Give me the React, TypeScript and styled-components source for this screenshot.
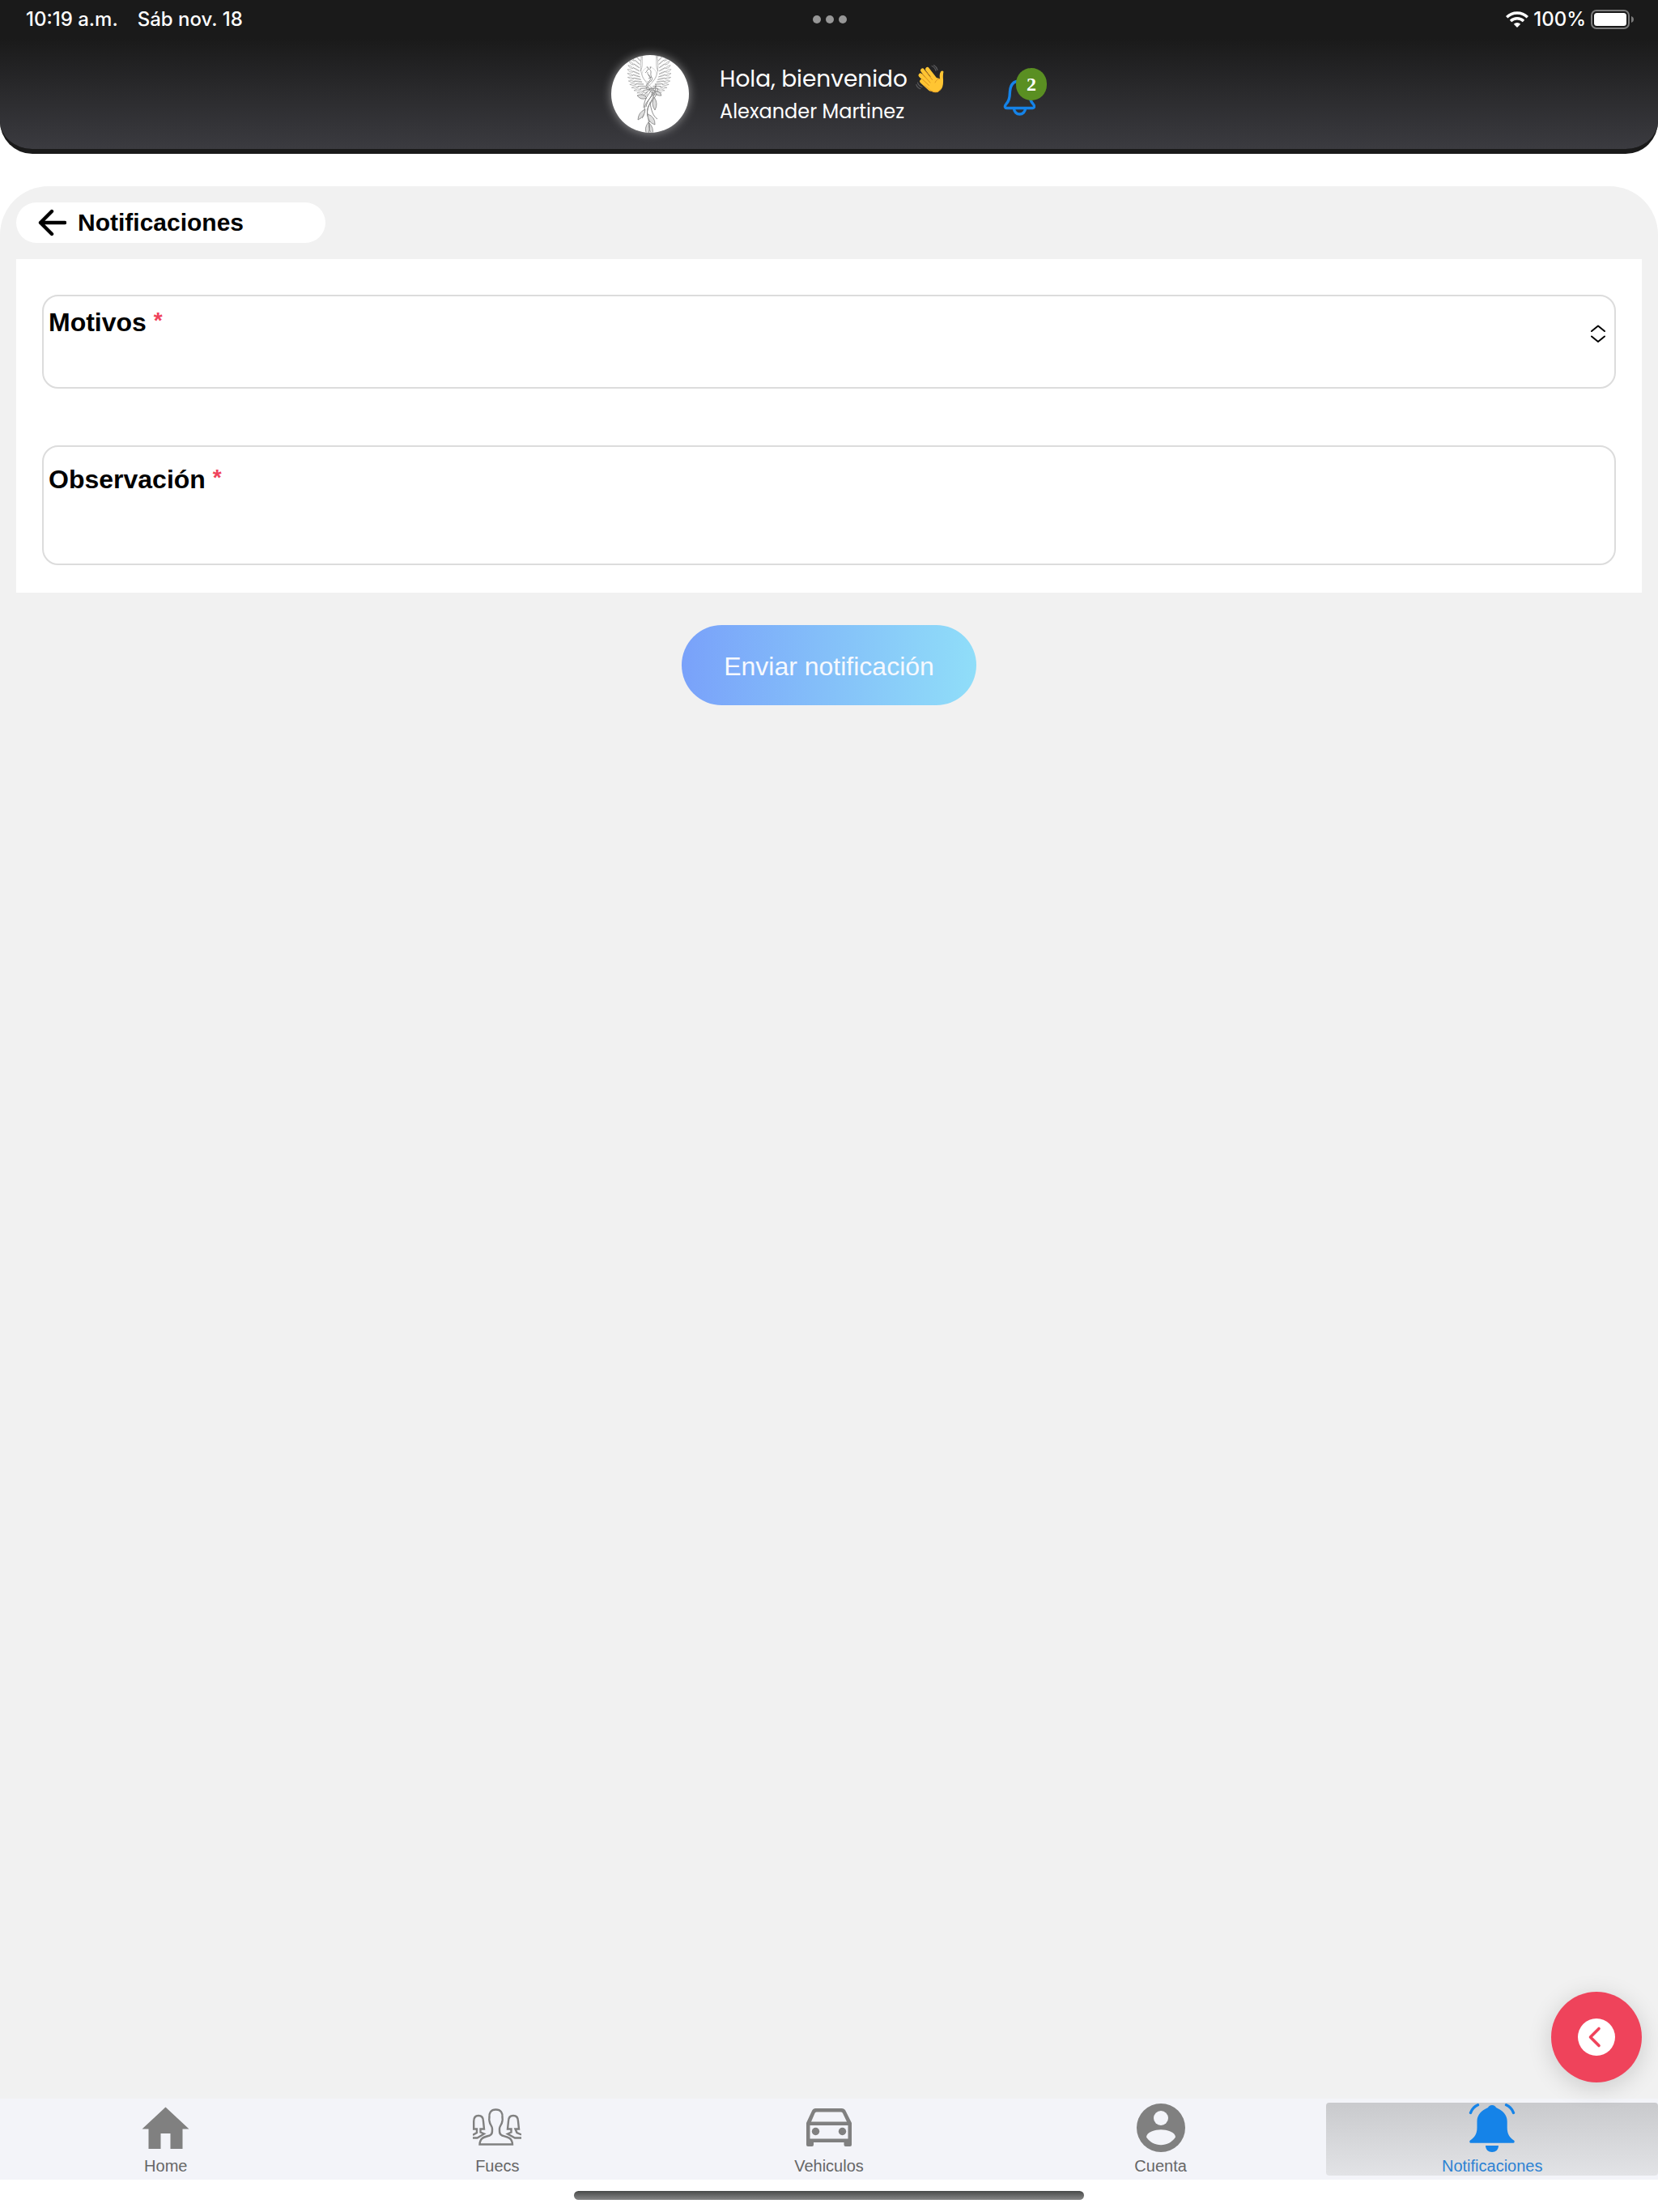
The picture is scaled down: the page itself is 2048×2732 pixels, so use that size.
import React, { useState } from "react";
import styled, { createGlobalStyle } from "styled-components";

const sans = `"Liberation Sans", Arial, sans-serif`;
const rounded = `Poppins, Inter, "Liberation Sans", sans-serif`;

const GlobalStyle = createGlobalStyle`
  *, *::before, *::after { box-sizing: border-box; }
  body { margin: 0; background: #fff; font-family: ${sans}; }
  button, select, input { font: inherit; color: inherit; }
  svg { display: block; }
`;

const Page = styled.div`
  min-height: 100vh;
  display: flex;
  flex-direction: column;
`;

const Header = styled.header`
  background: linear-gradient(#1a1a1a 48px, #3b3b40 100%) padding-box, #1a1a1a;
  border-bottom: 6px solid #1a1a1a;
  border-radius: 0 0 40px 40px;
  color: #fff;
  height: 190px;
`;

const StatusBar = styled.div`
  display: grid;
  grid-template-columns: 1fr auto 1fr;
  align-items: center;
  height: 48px;
  padding: 0 30px 0 32px;
  font: 500 24px/28px Inter, sans-serif;
`;

const StatusGroup = styled.div<{ $end?: boolean; $gap: number }>`
  display: flex;
  align-items: center;
  justify-content: ${(p) => (p.$end ? "flex-end" : "flex-start")};
  gap: ${(p) => p.$gap}px;
`;

const Dot = styled.span`
  width: 10px;
  height: 10px;
  border-radius: 50%;
  background: #979797;
`;

const Welcome = styled.div`
  display: flex;
  justify-content: center;
  align-items: center;
  height: 136px;
`;

const Avatar = styled.div`
  width: 96px;
  height: 96px;
  margin-right: 38px;
  border-radius: 50%;
  background: #fff;
  box-shadow: 0 0 12px rgba(255, 255, 255, 0.5);
  overflow: hidden;
`;

const Greeting = styled.div`
  display: flex;
  flex-direction: column;
  margin-right: 72px;
  font-family: ${rounded};
`;

const Hello = styled.p`
  display: flex;
  align-items: center;
  gap: 10px;
  margin: 0;
  font-size: 28px;
  line-height: 44px;
`;

const UserName = styled.p`
  margin: 0;
  font-size: 24px;
  line-height: 36px;
`;

const BellButton = styled.button`
  position: relative;
  display: flex;
  align-items: flex-end;
  width: 54px;
  height: 64px;
  padding: 0 0 4px;
  border: 0;
  background: none;
`;

const Badge = styled.span`
  position: absolute;
  top: 0;
  right: 0;
  width: 38px;
  height: 40px;
  border-radius: 20px;
  background: #5a8f22;
  color: #fff;
  font: bold 24px/40px "Liberation Serif", "Times New Roman", serif;
  text-align: center;
`;

const Main = styled.main`
  flex: 1;
  display: flex;
  flex-direction: column;
  margin-top: 40px;
  padding: 20px;
  border-radius: 60px 60px 0 0;
  background: #f1f1f1;
`;

const BackButton = styled.button`
  display: flex;
  align-items: center;
  gap: 14px;
  width: 19%;
  min-width: 320px;
  height: 50px;
  padding: 0 26px;
  border: 0;
  border-radius: 25px;
  background: #fff;
  color: #000;
  font: bold 30px/36px ${sans};
`;

const Form = styled.form`
  display: flex;
  flex-direction: column;
  align-items: center;
  gap: 40px;
  margin-top: 20px;
`;

const Card = styled.div`
  align-self: stretch;
  display: flex;
  flex-direction: column;
  gap: 70px;
  padding: 44px 32px 34px;
  background: #fff;
`;

const Field = styled.div<{ $tall?: boolean }>`
  display: flex;
  justify-content: space-between;
  height: ${(p) => (p.$tall ? 148 : 116)}px;
  padding: ${(p) => (p.$tall ? 22 : 14)}px 10px 0 6px;
  border: 2px solid #dcdcdc;
  border-radius: 20px;
  background: #fff;
`;

const FieldBody = styled.div`
  flex: 1;
  display: flex;
  flex-direction: column;
`;

const Label = styled.label`
  font: bold 32px/36px ${sans};
  color: #000;
`;

const Required = styled.span`
  color: #ef435b;
  font-size: 28px;
  line-height: 24px;
  vertical-align: 4px;
`;

const Select = styled.select`
  flex: 1;
  width: 100%;
  padding: 0;
  border: 0;
  outline: 0;
  background: transparent;
  appearance: none;
  font-size: 28px;
`;

const TextInput = styled.input`
  flex: 1;
  width: 100%;
  padding: 0;
  border: 0;
  outline: 0;
  background: transparent;
  font-size: 28px;
`;

const Submit = styled.button`
  padding: 33px 52px 30px;
  border: 0;
  border-radius: 50px;
  background: linear-gradient(92deg, #79a1fa, #83bdf9 45%, #90def9);
  color: #f6f9fe;
  font: 32px/36px ${sans};
`;

const BackFab = styled.button`
  position: fixed;
  right: 20px;
  bottom: 160px;
  display: flex;
  align-items: center;
  justify-content: center;
  width: 112px;
  height: 112px;
  padding: 0;
  border: 0;
  border-radius: 50%;
  background: #ef435b;
  box-shadow: 0 6px 30px rgba(0, 0, 0, 0.16);
`;

const TabBar = styled.nav`
  position: relative;
  display: grid;
  grid-template-columns: repeat(5, 1fr);
  padding: 5px 0;
  background: #f3f4f9;
`;

const Tab = styled.a<{ $active?: boolean }>`
  display: flex;
  flex-direction: column;
  align-items: center;
  gap: 5px;
  height: 90px;
  padding-top: 1px;
  border-radius: 4px;
  background: ${(p) => (p.$active ? "linear-gradient(#c9cacd, #e2e3e6)" : "none")};
  color: ${(p) => (p.$active ? "#2c82d3" : "#666")};
  font-size: 20px;
  line-height: 24px;
  text-decoration: none;
`;

const HomeArea = styled.div`
  display: flex;
  justify-content: center;
  height: 40px;
  padding-top: 14px;
  background: #fff;
`;

const HomeIndicator = styled.div`
  width: 630px;
  height: 11px;
  border-radius: 6px;
  background: linear-gradient(#484a49, #868686);
`;

type Pt = [number, number];

const bezier = (p: Pt[], t: number): Pt => {
  const u = 1 - t;
  const k = [u * u * u, 3 * u * u * t, 3 * u * t * t, t * t * t];
  return [0, 1].map((a) => p.reduce((s, q, i) => s + q[a] * k[i], 0)) as Pt;
};

const leaf = ([x1, y1]: Pt, [x2, y2]: Pt, w: number) => {
  const mx = (x1 + x2) / 2;
  const my = (y1 + y2) / 2;
  const l = Math.hypot(x2 - x1, y2 - y1) || 1;
  const nx = (-(y2 - y1) / l) * w;
  const ny = ((x2 - x1) / l) * w;
  return `M${x1} ${y1}Q${mx + nx} ${my + ny} ${x2} ${y2}Q${mx - nx} ${my - ny} ${x1} ${y1}`;
};

const wingTips: Pt[] = [[42, 51], [16, 45], [17, 18], [25, -2]];
const wingMid: Pt[] = [[44, 46], [23, 38], [24, 18], [32, -4]];
const wingSpine: Pt[] = [[48, 42], [32, 34], [33, 18], [38, -4]];
const feathers = Array.from({ length: 14 }, (_, i) => {
  const t = i / 13;
  const s = Math.max(0, t - 0.1);
  return leaf(bezier(wingMid, s), bezier(wingTips, t), 2.4) + leaf(bezier(wingSpine, s), bezier(wingMid, t), 1);
}).join("");

const Wing = () => <path d={feathers + "M38 -2C35 14 34 28 50 40M36 20C40 14 37 6 39 0"} />;

const Phoenix = () => (
  <svg width="96" height="96" viewBox="0 0 96 96" fill="none" stroke="#808080" strokeWidth="0.5" role="img" aria-label="Foto de perfil">
    <Wing />
    <g transform="translate(94 0) scale(-1 1)">
      <Wing />
    </g>
    <circle cx="47" cy="24" r="9" stroke="#bbb" />
    <path d="M44 20C45 15 50 18 49 22C48 27 52 28 50 31C46 35 42 38 47 41C52 43 56 40 55 36M45 21C44 25 50 27 48 31C44 35 41 39 45 43M46 17L44 14M48 17L49 14M44 20L42 22M46 24L49 28M46 29L50 27" strokeWidth="0.8" />
    <path d="M55 38C56 48 45 54 42 62C40 68 42 73 38 78M52 42C52 50 44 56 43 64M57 41C58 50 50 56 46 63C43 70 45 77 48 83M50 43C45 50 41 54 40 65M54 47C50 58 41 66 46 78L47 96M48 58C49 68 52 76 57 79" strokeWidth="0.9" />
    <path d={leaf([44, 53], [32, 50], 5) + leaf([42, 67], [33, 80], 5) + leaf([45, 73], [54, 86], 6) + leaf([53, 52], [54, 68], 5) + leaf([46, 83], [44, 98], 5) + leaf([47, 84], [51, 98], 4) + leaf([54, 45], [62, 50], 4)} fill="#ddd" strokeWidth="0.8" />
  </svg>
);

const Wave = () => (
  <svg width="36" height="36" viewBox="0 0 36 36" fill="none" strokeLinecap="round" aria-hidden="true">
    <path d="M20 1.5Q24 3 25 7.5M22.5 .5Q26 2.5 27 6.5M2.5 22Q3.500 26 8 27.500M.8 24.500Q2 28.500 6 29.800" stroke="#5b5b5d" strokeWidth="1.1" />
    <path d="M15 14L30 17Q29 12 31 8.500Q33 6.500 34.500 8.500Q33.500 12 34 18Q34.500 27 31 31Q26 36.500 20 33L10 25Z" fill="#ffc533" />
    <path d="M14.500 5.500L25 19M8.500 7L22 24M6 13L19 26M7.500 20.500L18 30" stroke="#ffc533" strokeWidth="5" />
    <path d="M12 7.500L20.500 18.500M8.500 11.500L18 22M8.500 18L16.500 25.500" stroke="#d9901e" strokeWidth="1" />
    <path d="M24 22Q26 17 30 17.500" stroke="#e29a22" strokeWidth="1" />
    <path d="M11 25.500L19 32Q27 36 31 30" stroke="#eba126" strokeWidth="1" />
  </svg>
);

const HeaderBell = () => (
  <svg width="40" height="48" viewBox="0 0 40 48" fill="none" stroke="#1583e8" strokeWidth="3.400" strokeLinejoin="round" aria-hidden="true">
    <path d="M20.500 4C12 4 9 10 8.500 17C8.200 26 7 29 3.500 33C1.500 35.500 2.500 37.500 4.500 37.500H36.500C38.500 37.500 39.500 35.500 37.500 33C34 29 32.800 26 32.500 17C32 10 29 4 20.500 4Z" />
    <path d="M13.500 38a7 7 0 0 0 14 0" />
  </svg>
);

const Wifi = () => (
  <svg width="28" height="20" viewBox="0 0 28 20" fill="none" stroke="#fff" strokeWidth="3.400" aria-hidden="true">
    <path d="M1.200 7.200a18.200 18.200 0 0 1 25.600 0M6 12a11.400 11.400 0 0 1 16 0" />
    <path d="M14 20L9.800 15.800a6 6 0 0 1 8.400 0Z" fill="#fff" stroke="none" />
  </svg>
);

const Battery = () => (
  <svg width="53" height="24" viewBox="0 0 53 24" aria-hidden="true">
    <rect x="1" y="1" width="46" height="22" rx="6" fill="none" stroke="#7b7b7b" strokeWidth="2" />
    <rect x="4" y="4" width="40" height="16" rx="3.500" fill="#fff" />
    <path d="M50 8q3 1.200 3 4t-3 4Z" fill="#7b7b7b" />
  </svg>
);

const ArrowLeft = () => (
  <svg width="36" height="34" viewBox="0 0 36 34" fill="none" stroke="#000" strokeWidth="4.400" strokeLinecap="round" strokeLinejoin="round" aria-hidden="true">
    <path d="M18 3L4 17L18 31M4 17H34" />
  </svg>
);

const UpDown = () => (
  <svg width="20" height="64" viewBox="0 0 20 64" fill="none" stroke="#000" strokeWidth="2" strokeLinecap="round" strokeLinejoin="round" aria-hidden="true">
    <path d="M2 29L10 22.500L18 29M2 35.500L10 42L18 35.500" />
  </svg>
);

const FabIcon = () => (
  <svg width="46" height="46" viewBox="0 0 46 46" fill="none" aria-hidden="true">
    <circle cx="23" cy="23" r="23" fill="#fff" />
    <path d="M26 12.500L15.500 23L26 33.500" stroke="#ef435b" strokeWidth="3.600" strokeLinecap="round" strokeLinejoin="round" />
  </svg>
);

const HomeIcon = () => (
  <svg width="60" height="60" viewBox="0 0 60 60" fill="#808080" aria-hidden="true">
    <path d="M29.500 4.500L58.500 31.500H50.500V56H35.500V37H23.500V56H8.500V31.500H.5Z" />
  </svg>
);

const GroupIcon = () => (
  <svg width="60" height="60" viewBox="0 0 60 60" fill="none" stroke="#808080" strokeWidth="2.400" aria-hidden="true">
    <path d="M28.500 7.500C22 7.500 20 12 20.500 17C20.200 19.500 20 20.500 20.500 21.500C21 26 24 28 24 31C24 35 24.500 38 21 39.500C14 41.500 9 42 8.500 50.500H49C48.500 42 43 41.500 36 39.500C32.500 38 33 35 33 31C33 28 36 26 36.500 21.500C37 20.500 36.800 19.500 36.500 17C37 12 35 7.500 28.500 7.500Z" />
    <path d="M0 31.500H5V36L0 39M0 42.500H5.500L14 37.500L9.500 35.500V31.500H14L13 22C13 17 10.500 15 7 15S1.200 17 1.200 22V32" />
    <path d="M60 38.500L54.500 36L52.500 31.500H57L56 22C56 17 53.500 15 50 15S44 17 44 22L43 31.500H47.500V35.500L43 37.500L52 42.500H60" />
  </svg>
);

const CarIcon = () => (
  <svg width="60" height="60" viewBox="0 0 60 60" aria-hidden="true">
    <path fill="#808080" fillRule="evenodd" d="M13.500 6H45.500Q49.500 6 51 10L58 24V51Q58 53 56 53H50.500Q48.500 53 48.500 51V48H11V51Q11 53 9 53H4Q2 53 2 51V24L8.500 10Q10 6 13.500 6ZM14.500 10.500Q13 10.500 12.500 12L8 22.500H52L47 12Q46.500 10.500 45 10.500ZM6.500 27V43.500H53.500V27Z" />
    <circle cx="13.500" cy="34.500" r="4.700" fill="#808080" />
    <circle cx="46.500" cy="34.500" r="4.700" fill="#808080" />
  </svg>
);

const AccountIcon = () => (
  <svg width="60" height="60" viewBox="0 0 60 60" fill="#f3f4f9" aria-hidden="true">
    <circle cx="30" cy="30" r="30" fill="#808080" />
    <circle cx="30" cy="18" r="9" />
    <path d="M12 41.500C12.300 35 23 32.300 30 32.300S47.700 35 48 41.500A21.500 21.500 0 0 1 12 41.500Z" />
  </svg>
);

const RingingBell = () => (
  <svg width="60" height="60" viewBox="0 0 60 60" fill="#1583e8" aria-hidden="true">
    <path d="M30 2C32.500 2 34.500 3.500 35 5C43 8.500 48.700 14 48.700 22V30C48.700 38 52 42 57 45.500C58.500 47 57.500 48.800 56 48.800H4C2.500 48.800 1.500 47 3 45.500C8 42 11.500 38 11.500 30V22C11.500 14 17 8.500 25 5C25.500 3.500 27.500 2 30 2Z" />
    <path d="M22 52H38C38 57 34.500 60 30 60S22 57 22 52Z" />
    <path d="M3.500 11.500Q6 4.500 12.500 1.800M56.500 11.500Q54 4.500 47.500 1.800" fill="none" stroke="#1583e8" strokeWidth="3.400" strokeLinecap="round" />
  </svg>
);

const tabs = [
  { label: "Home", Icon: HomeIcon },
  { label: "Fuecs", Icon: GroupIcon },
  { label: "Vehiculos", Icon: CarIcon },
  { label: "Cuenta", Icon: AccountIcon },
  { label: "Notificaciones", Icon: RingingBell, active: true },
];

export default function App() {
  const [reason, setReason] = useState("");
  const [note, setNote] = useState("");

  return (
    <Page>
      <GlobalStyle />
      <Header>
        <StatusBar>
          <StatusGroup $gap={24}>
            <span>10:19 a.m.</span>
            <span>Sáb nov. 18</span>
          </StatusGroup>
          <StatusGroup $gap={6}>
            <Dot />
            <Dot />
            <Dot />
          </StatusGroup>
          <StatusGroup $end $gap={6}>
            <Wifi />
            <span>100%</span>
            <Battery />
          </StatusGroup>
        </StatusBar>
        <Welcome>
          <Avatar>
            <Phoenix />
          </Avatar>
          <Greeting>
            <Hello>
              Hola, bienvenido <Wave />
            </Hello>
            <UserName>Alexander Martinez</UserName>
          </Greeting>
          <BellButton type="button" aria-label="Notificaciones pendientes">
            <HeaderBell />
            <Badge>2</Badge>
          </BellButton>
        </Welcome>
      </Header>

      <Main>
        <BackButton type="button">
          <ArrowLeft />
          Notificaciones
        </BackButton>
        <Form onSubmit={(e) => e.preventDefault()}>
          <Card>
            <Field>
              <FieldBody>
                <Label htmlFor="reason">
                  Motivos <Required>*</Required>
                </Label>
                <Select id="reason" value={reason} onChange={(e) => setReason(e.target.value)}>
                  <option value="" />
                </Select>
              </FieldBody>
              <UpDown />
            </Field>
            <Field $tall>
              <FieldBody>
                <Label htmlFor="note">
                  Observación <Required>*</Required>
                </Label>
                <TextInput id="note" value={note} onChange={(e) => setNote(e.target.value)} />
              </FieldBody>
            </Field>
          </Card>
          <Submit type="submit">Enviar notificación</Submit>
        </Form>
      </Main>

      <TabBar>
        {tabs.map(({ label, Icon, active }) => (
          <Tab key={label} href="#" $active={active}>
            <Icon />
            {label}
          </Tab>
        ))}
      </TabBar>
      <HomeArea>
        <HomeIndicator />
      </HomeArea>
      <BackFab type="button" aria-label="Volver">
        <FabIcon />
      </BackFab>
    </Page>
  );
}
